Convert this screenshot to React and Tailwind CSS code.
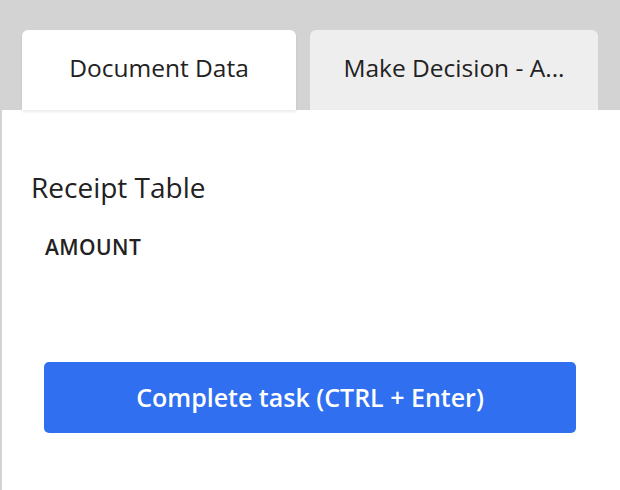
import React from 'react';

const App = () => {
  return (
    <div className="min-h-screen bg-[#d3d3d3] pt-[30px] flex flex-col" style={{ fontFamily: '"Open Sans", "Noto Sans", sans-serif' }}>
      {/* Tabs */}
      <div className="flex gap-[14px] pl-[22px]">
        <button className="w-[274px] h-[80px] pb-[3px] bg-white rounded-t-[6px] text-[24.5px] text-[#222] shadow-[0_2px_3px_rgba(0,0,0,0.08)] relative z-10">
          Document Data
        </button>
        <button className="w-[288px] h-[80px] pb-[3px] bg-[#eeeeee] rounded-t-[6px] text-[24.5px] text-[#222] px-[30px] whitespace-nowrap">
          Make Decision - A...
        </button>
      </div>

      {/* Panel */}
      <div className="flex-1 ml-[2px] bg-white pt-[58px] pl-[29px] pr-[44px]">
        <h2 className="text-[28px] leading-[38px] text-[#222]">Receipt Table</h2>
        <div className="mt-[27px] pl-[14px] text-[21px] leading-[28px] font-semibold text-[#222] tracking-[0.02em]">
          AMOUNT
        </div>
        <button className="mt-[101px] ml-[13px] w-[532px] h-[71px] bg-[#2f6ff0] rounded-[5px] text-white text-[25px] font-semibold">
          Complete task (CTRL + Enter)
        </button>
      </div>
    </div>
  );
};

export default App;
